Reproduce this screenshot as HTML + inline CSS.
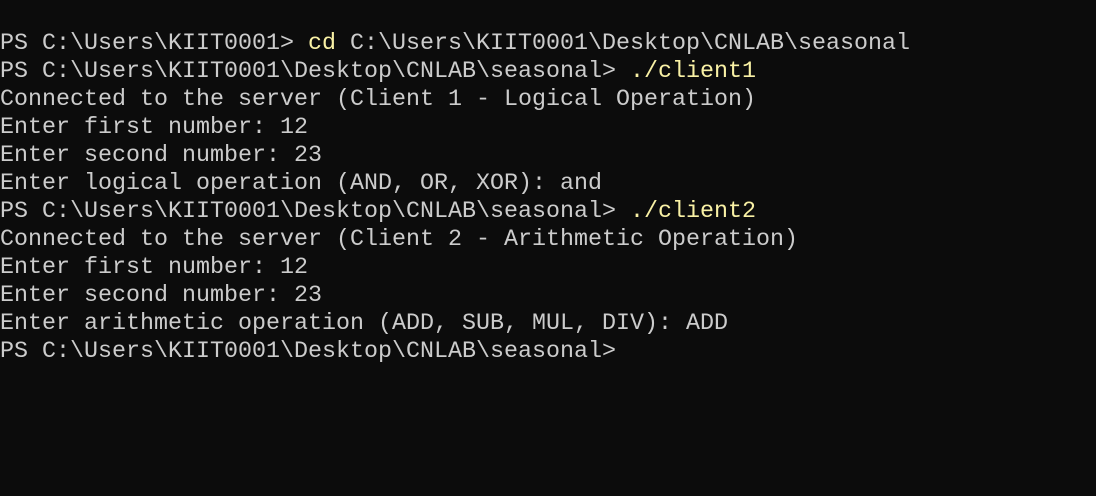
<!DOCTYPE html>
<html><head><style>
html,body{margin:0;padding:0;background:#0c0c0c;width:1096px;height:496px;overflow:hidden}
pre{margin:0;position:absolute;left:0;top:30px;font-family:"Liberation Mono",monospace;font-size:23.33px;line-height:28px;color:#cccccc;white-space:pre}
.y{color:#f9f1a5}
</style></head><body>
<pre>PS C:\Users\KIIT0001&gt; <span class="y">cd</span> C:\Users\KIIT0001\Desktop\CNLAB\seasonal
PS C:\Users\KIIT0001\Desktop\CNLAB\seasonal&gt; <span class="y">./client1</span>
Connected to the server (Client 1 - Logical Operation)
Enter first number: 12
Enter second number: 23
Enter logical operation (AND, OR, XOR): and
PS C:\Users\KIIT0001\Desktop\CNLAB\seasonal&gt; <span class="y">./client2</span>
Connected to the server (Client 2 - Arithmetic Operation)
Enter first number: 12
Enter second number: 23
Enter arithmetic operation (ADD, SUB, MUL, DIV): ADD
PS C:\Users\KIIT0001\Desktop\CNLAB\seasonal&gt;</pre>
</body></html>
